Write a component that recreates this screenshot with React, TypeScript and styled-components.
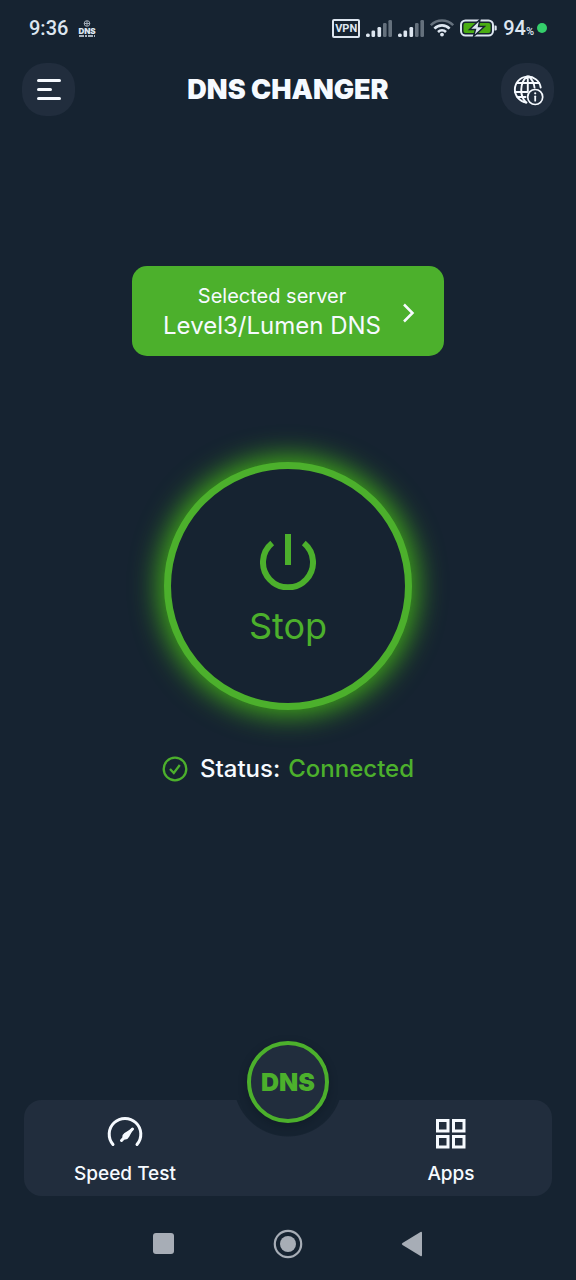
import React from "react";
import styled, { createGlobalStyle } from "styled-components";

const color = {
  page: "#162331",
  surface: "#212d3d",
  green: "#4cb02c",
  text: "#f6faff",
  system: "#dde6f0",
  muted: "#a7adb6",
};

const GlobalStyle = createGlobalStyle`
  * { box-sizing: border-box; }
  body {
    margin: 0;
    background: ${color.page};
    color: ${color.text};
    font-family: Inter, "Liberation Sans", sans-serif;
  }
  button { font: inherit; color: inherit; border: 0; padding: 0; background: none; cursor: pointer; }
  svg { display: block; flex: none; }
`;

const Page = styled.div`
  min-height: 100vh;
  display: flex;
  flex-direction: column;
`;

const StatusBar = styled.div`
  display: flex;
  align-items: center;
  justify-content: space-between;
  height: 56px;
  padding: 0 29px;
  color: ${color.system};
  font-family: Roboto, sans-serif;
  font-size: 20px;
  font-weight: 500;
`;

const StatusGroup = styled.div<{ $gap: number }>`
  display: flex;
  align-items: center;
  gap: ${(p) => p.$gap}px;
`;

const MiniLogo = styled.span`
  display: flex;
  flex-direction: column;
  align-items: center;
  font-family: Inter, sans-serif;
  font-size: 8px;
  line-height: 8px;
  font-weight: 900;
`;

const VpnBadge = styled.span`
  width: 28px;
  height: 19px;
  border: 2px solid currentColor;
  border-radius: 2px;
  font-size: 11px;
  line-height: 15px;
  font-weight: 700;
  display: flex;
  justify-content: center;
`;

const Percent = styled.span`
  display: flex;
  align-items: baseline;
  small { font-size: 11px; }
`;

const Dot = styled.span`
  width: 10px;
  height: 10px;
  border-radius: 50%;
  background: #35cf6b;
`;

const Header = styled.header`
  display: flex;
  align-items: center;
  justify-content: space-between;
  padding: 7px 22px 0;
`;

const RoundButton = styled.button`
  display: grid;
  place-items: center;
  width: 53px;
  height: 53px;
  border-radius: 24px;
  background: ${color.surface};
`;

const Title = styled.h1`
  margin: 0;
  font-size: 27px;
  line-height: 32px;
  font-weight: 900;
`;

const Main = styled.main`
  flex: 1;
  display: flex;
  flex-direction: column;
  align-items: center;
  padding: 150px 24px 60px;
`;

const ServerButton = styled.button`
  display: flex;
  align-items: center;
  gap: 20px;
  padding: 15px 28px 15px 31px;
  border-radius: 15px;
  background: ${color.green};
`;

const ServerText = styled.span`
  display: flex;
  flex-direction: column;
  align-items: center;
`;

const ServerLabel = styled.span`
  font-size: 20px;
  line-height: 30px;
`;

const ServerName = styled.span`
  font-size: 24px;
  line-height: 30px;
`;

const PowerButton = styled.button`
  display: flex;
  flex-direction: column;
  align-items: center;
  justify-content: center;
  gap: 14px;
  width: 248px;
  height: 248px;
  margin-top: 106px;
  && { border: 7px solid ${color.green}; padding-top: 10px; }
  border-radius: 50%;
  color: ${color.green};
  background: ${color.page};
  box-shadow: 0 0 28px 5px #43b018;
`;

const PowerLabel = styled.span`
  font-size: 36px;
  line-height: 44px;
`;

const Status = styled.p`
  display: flex;
  align-items: center;
  margin: 44px 0 0;
  font-size: 24px;
  line-height: 30px;
  font-weight: 500;
  svg { margin-right: 12px; color: ${color.green}; }
  strong { margin-left: 8px; font-weight: 500; color: ${color.green}; }
`;

const BottomNav = styled.nav`
  position: relative;
  display: flex;
  justify-content: space-between;
  height: 96px;
  margin: 0 24px;
  border-radius: 18px;
  background: radial-gradient(circle at 50% -18px, transparent 54px, ${color.surface} 55px);
`;

const NavItem = styled.button`
  display: flex;
  flex-direction: column;
  align-items: center;
  gap: 10px;
  width: 202px;
  padding-top: 16px;
  font-size: 19px;
  line-height: 24px;
  font-weight: 500;
`;

const DnsButton = styled.button`
  position: absolute;
  left: 50%;
  top: -59px;
  width: 82px;
  height: 82px;
  margin-left: -41px;
  && { border: 4px solid ${color.green}; color: ${color.green}; }
  border-radius: 50%;
  background: ${color.surface};
  box-shadow: 0 3px 8px rgba(8, 16, 26, 0.35);
  font-size: 25px;
  font-weight: 900;
  line-height: 74px;
`;

const SystemNav = styled.div`
  display: flex;
  align-items: center;
  justify-content: center;
  gap: 94px;
  height: 84px;
  padding-top: 12px;
  color: ${color.muted};
`;

const Signal = () => (
  <svg width="26" height="18" viewBox="0 0 26 18" fill="currentColor">
    <rect x="0" y="14.500" width="3.800" height="3.500" rx="1.500" />
    <rect x="5.500" y="11.500" width="3.600" height="6.500" rx="1.300" />
    <rect x="11.500" y="8" width="3.600" height="10" rx="1.300" />
    <rect x="17" y="4" width="3.600" height="14" rx="1.300" opacity=".4" />
    <rect x="22.400" y="1" width="3.600" height="17" rx="1.300" opacity=".4" />
  </svg>
);

const Wifi = () => (
  <svg width="24" height="18" viewBox="0 0 24 18" fill="none" stroke="currentColor" strokeWidth="2.6">
    <path d="M.8 6.2C7 -.1 17 -.1 23.2 6.2" opacity=".4" />
    <path d="M4.4 9.6c4.2-4.3 11-4.3 15.2 0" />
    <path d="M8 13c2.3-2.2 5.7-2.2 8 0" />
    <circle cx="12" cy="15.6" r="1.9" fill="currentColor" stroke="none" />
  </svg>
);

const Battery = () => (
  <svg width="37" height="18" viewBox="0 0 37 18" fill="none">
    <rect x="1" y="1.5" width="32" height="15" rx="4.5" stroke="currentColor" strokeWidth="2" />
    <rect x="3.5" y="4" width="27" height="10" rx="2" fill="#4aad12" />
    <path d="M34.5 6.5h1q1.2 0 1.2 1.2v2.6q0 1.2-1.2 1.2h-1z" fill="currentColor" />
    <path d="M20 .5 9.500 10.500h6L13.500 17.500 24.500 7.500h-6z" fill="currentColor" stroke={color.page} strokeWidth="1.400" />
  </svg>
);

const Globe = () => (
  <svg width="32" height="32" viewBox="0 0 32 32" fill="none" stroke="currentColor" strokeWidth="1.900" strokeLinecap="round">
    <path d="M28.700 13.500A13 13 0 1 0 14.500 28.500" />
    <path d="M15 2.500C7.500 9 7.500 22 14 28.500M17 2.500c3.200 3 5 6.500 5.500 11M4.800 9h22.400M3 18h12.500M5.500 23h8M15.800 2.500v15" />
    <circle cx="23.200" cy="23" r="7.500" strokeWidth="1.700" />
    <path d="M23.200 22.300v4.400" strokeWidth="1.800" />
    <circle cx="23.200" cy="19.300" r="1.100" fill="currentColor" stroke="none" />
  </svg>
);

export default function App() {
  return (
    <Page>
      <GlobalStyle />
      <StatusBar>
        <StatusGroup $gap={10}>
          <span>9:36</span>
          <MiniLogo>
            <svg width="8" height="7" viewBox="0 0 8 7" fill="none" stroke="currentColor" opacity=".7">
              <circle cx="4" cy="3.5" r="2.800" />
              <path d="M1 3.500h6M4 1v5" />
            </svg>
            DNS
            <svg width="16" height="2" viewBox="0 0 16 2" stroke="currentColor" strokeWidth="1.500" strokeDasharray="5 1 2 1">
              <path d="M0 1h16" />
            </svg>
          </MiniLogo>
        </StatusGroup>
        <StatusGroup $gap={6}>
          <VpnBadge>VPN</VpnBadge>
          <Signal />
          <Signal />
          <Wifi />
          <Battery />
          <StatusGroup $gap={3}>
            <Percent>94<small>%</small></Percent>
            <Dot />
          </StatusGroup>
        </StatusGroup>
      </StatusBar>

      <Header>
        <RoundButton aria-label="Menu">
          <svg width="24" height="22" viewBox="0 0 24 22" stroke="currentColor" strokeWidth="3" strokeLinecap="round">
            <path d="M1.500 1.500h21M1.500 10.500h12M1.500 19.500h21" />
          </svg>
        </RoundButton>
        <Title>DNS CHANGER</Title>
        <RoundButton aria-label="Network information">
          <Globe />
        </RoundButton>
      </Header>

      <Main>
        <ServerButton>
          <ServerText>
            <ServerLabel>Selected server</ServerLabel>
            <ServerName>Level3/Lumen DNS</ServerName>
          </ServerText>
          <svg width="15" height="24" viewBox="0 0 15 24" fill="none" stroke="currentColor" strokeWidth="2.500">
            <path d="M3 5.500 11.500 14 3 22.500" />
          </svg>
        </ServerButton>

        <PowerButton>
          <svg width="56" height="56" viewBox="0 0 56 56" fill="none" stroke="currentColor" strokeWidth="6">
            <path d="M28 0v31" />
            <path d="M12.200 9A25 25 0 1 0 43.800 9" />
          </svg>
          <PowerLabel>Stop</PowerLabel>
        </PowerButton>

        <Status>
          <svg width="26" height="26" viewBox="0 0 26 26" fill="none" stroke="currentColor" strokeWidth="2.300">
            <circle cx="13" cy="13" r="11.300" />
            <path d="m8 13 3.800 4 6-8" />
          </svg>
          Status: <strong>Connected</strong>
        </Status>
      </Main>

      <BottomNav>
        <NavItem>
          <svg width="36" height="36" viewBox="0 0 36 36" fill="none" stroke="currentColor" strokeWidth="3" strokeLinecap="round">
            <path d="M6 28.500A15.800 15.800 0 1 1 30 28.500" />
            <path d="M14.500 24.500 25.500 13" />
            <path d="M25.500 13 21.500 20.500Q20 23.500 17 22.500 15 20 17.500 18z" fill="currentColor" strokeWidth="1.500" strokeLinejoin="round" />
          </svg>
          Speed Test
        </NavItem>
        <DnsButton>DNS</DnsButton>
        <NavItem>
          <svg width="36" height="36" viewBox="0 0 36 36" fill="none" stroke="currentColor" strokeWidth="3">
            <rect x="4.500" y="4.500" width="10.500" height="10.500" />
            <rect x="20.500" y="4.500" width="10.500" height="10.500" />
            <rect x="4.500" y="20.500" width="10.500" height="10.500" />
            <rect x="20.500" y="20.500" width="10.500" height="10.500" />
          </svg>
          Apps
        </NavItem>
      </BottomNav>

      <SystemNav>
        <button aria-label="Recent apps">
          <svg width="30" height="30" viewBox="0 0 30 30" fill="currentColor">
            <rect x="4" y="4" width="21" height="21" rx="3" />
          </svg>
        </button>
        <button aria-label="Home">
          <svg width="30" height="30" viewBox="0 0 30 30" fill="currentColor">
            <circle cx="15" cy="15" r="13.200" fill="none" stroke="currentColor" strokeWidth="2.200" />
            <circle cx="15" cy="15" r="8" />
          </svg>
        </button>
        <button aria-label="Back">
          <svg width="30" height="30" viewBox="0 0 30 30" fill="currentColor">
            <path d="M23.500 3q1.500-.7 1.500 1v22q0 1.700-1.500 1L5.500 16q-1.500-1 0-2z" />
          </svg>
        </button>
      </SystemNav>
    </Page>
  );
}
